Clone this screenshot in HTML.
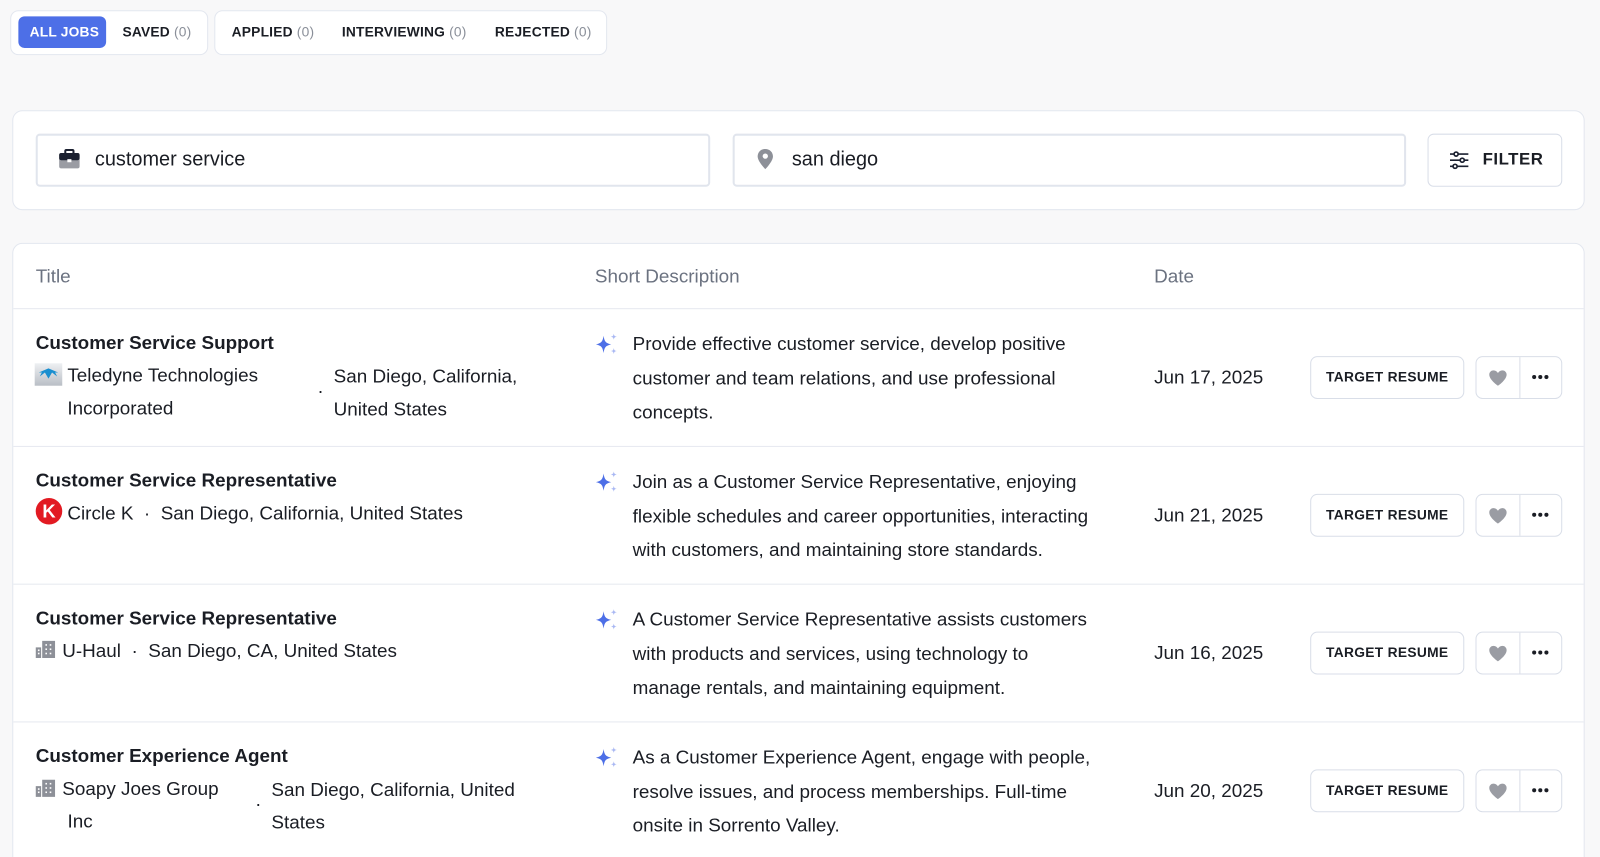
<!DOCTYPE html>
<html style="overflow:hidden;width:1600px;height:857px"><head><meta charset="utf-8"><style>
*{box-sizing:border-box;margin:0;padding:0}
body{width:1600px;height:857px;overflow:hidden;background:#f8f8f9;font-family:"Liberation Sans",sans-serif;color:#1a1d24;position:relative}
#w{position:absolute;left:0;top:0;width:1568px;height:840px;overflow:hidden;transform:scale(1.0204);transform-origin:0 0}
.abs{position:absolute}
.box{position:absolute;background:#fff;border:1.5px solid #e3e7ef;border-radius:8px}
.tab{position:absolute;top:24px;font-size:13.5px;font-weight:bold;letter-spacing:.2px;white-space:nowrap}
.tab span{font-weight:normal;color:#8a8f99}
.t{font-size:18.5px;white-space:nowrap;position:absolute}
.title{font-weight:bold;font-size:18.5px}
.sub{line-height:32px}
.desc{line-height:33.5px}
.btn{position:absolute;width:151px;height:42px;border:1.5px solid #d9dee8;border-radius:7px;background:#fff;font-size:13.5px;font-weight:bold;text-align:center;line-height:39px;letter-spacing:.3px}
.ic{position:absolute;width:85px;height:42px;border:1.5px solid #d9dee8;border-radius:7px;background:#fff}
.ic:after{content:"";position:absolute;left:42px;top:0;bottom:0;border-left:1.5px solid #d9dee8}
.row{position:absolute;left:13px;width:1539px;border-top:1.5px solid #e6e9f0}
</style></head><body><div id="w">
<div class="box" style="left:10px;top:10px;width:194px;height:44px"></div>
<div class="abs" style="left:18px;top:16px;width:86px;height:31px;background:#4d6fe7;border-radius:6px"></div>
<div class="tab" style="left:29px;color:#fff">ALL JOBS</div>
<div class="tab" style="left:120px">SAVED <span>(0)</span></div>
<div class="box" style="left:210px;top:10px;width:385px;height:44px"></div>
<div class="tab" style="left:227px">APPLIED <span>(0)</span></div>
<div class="tab" style="left:335px">INTERVIEWING <span>(0)</span></div>
<div class="tab" style="left:485px">REJECTED <span>(0)</span></div>

<div class="box" style="left:12px;top:108px;width:1541px;height:98px;border-radius:10px"></div>
<div class="abs" style="left:35px;top:131px;width:661px;height:52px;border:2px solid #e1e5ed;border-radius:4px"></div>
<svg class="abs" style="left:57px;top:146px" width="22" height="20" viewBox="0 0 22 20"><rect x="7" y="1" width="8" height="4" rx="1" fill="none" stroke="#1b2030" stroke-width="2"/><rect x="1" y="4" width="20" height="15" rx="2" fill="#9a9ca3"/><rect x="1" y="4" width="20" height="7" rx="2" fill="#1b2030"/><rect x="9" y="10" width="4" height="3" fill="#fff"/></svg>
<div class="t" style="left:93px;top:145px;font-size:19.5px">customer service</div>
<div class="abs" style="left:718px;top:131px;width:660px;height:52px;border:2px solid #e1e5ed;border-radius:4px"></div>
<svg class="abs" style="left:741px;top:145px" width="18" height="22" viewBox="0 0 18 22"><path d="M9 1C4.6 1 1.5 4.3 1.5 8.3c0 5 7.5 12.5 7.5 12.5s7.5-7.5 7.5-12.5C16.5 4.3 13.4 1 9 1z" fill="#8d9098"/><circle cx="9" cy="8" r="2.6" fill="#fff"/></svg>
<div class="t" style="left:776px;top:145px;font-size:19.5px">san diego</div>
<div class="abs" style="left:1399px;top:131px;width:132px;height:52px;border:1.5px solid #d9dee8;border-radius:6px;background:#fff"></div>
<svg class="abs" style="left:1420px;top:148px" width="20" height="18" viewBox="0 0 20 18" fill="none" stroke="#1b2030" stroke-width="1.6"><path d="M1 3h18M1 9h18M1 15h18"/><circle cx="7" cy="3" r="2" fill="#fff"/><circle cx="13" cy="9" r="2" fill="#fff"/><circle cx="6" cy="15" r="2" fill="#fff"/></svg>
<div class="t" style="left:1453px;top:147px;font-size:16.5px;font-weight:bold;letter-spacing:.5px">FILTER</div>

<div class="box" style="left:12px;top:238px;width:1541px;height:620px;border-radius:10px"></div>
<div class="t" style="left:35px;top:260px;color:#6b7280">Title</div>
<div class="t" style="left:583px;top:260px;color:#6b7280">Short Description</div>
<div class="t" style="left:1131px;top:260px;color:#6b7280">Date</div>

<div class="row" style="top:302px"></div>
<div class="row" style="top:437px"></div>
<div class="row" style="top:572px"></div>
<div class="row" style="top:707px"></div>

<div class="t title" style="left:35px;top:325px">Customer Service Support</div>
<div class="abs" style="left:34px;top:356px;width:27px;height:22px;background:linear-gradient(#eef0f3,#b9bec5)"></div>
<svg class="abs" style="left:36px;top:359px" width="23" height="12" viewBox="0 0 23 12"><path d="M11.5 2L2 6l3 0-2 4 5-4 3.5 6 3.5-6 5 4-2-4 3 0z" fill="#1a8fd0"/></svg>
<div class="t sub" style="left:66px;top:352px">Teledyne Technologies<br>Incorporated</div>
<div class="t" style="left:311px;top:372px">·</div>
<div class="t sub" style="left:327px;top:353px">San Diego, California,<br>United States</div>
<div class="t desc" style="left:620px;top:320px">Provide effective customer service, develop positive<br>customer and team relations, and use professional<br>concepts.</div>
<div class="t" style="left:1131px;top:359px">Jun 17, 2025</div>
<div class="btn" style="left:1284px;top:349px">TARGET RESUME</div>
<div class="ic" style="left:1446px;top:349px"></div>

<div class="t title" style="left:35px;top:460px">Customer Service Representative</div>
<div class="abs" style="left:35px;top:488px;width:26px;height:26px;border-radius:50%;background:#e21a22;color:#fff;font-weight:bold;font-size:18px;text-align:center;line-height:26px">K</div>
<div class="t" style="left:66px;top:492px">Circle K &nbsp;·&nbsp; San Diego, California, United States</div>
<div class="t desc" style="left:620px;top:455px">Join as a Customer Service Representative, enjoying<br>flexible schedules and career opportunities, interacting<br>with customers, and maintaining store standards.</div>
<div class="t" style="left:1131px;top:494px">Jun 21, 2025</div>
<div class="btn" style="left:1284px;top:484px">TARGET RESUME</div>
<div class="ic" style="left:1446px;top:484px"></div>

<div class="t title" style="left:35px;top:595px">Customer Service Representative</div>
<div class="t" style="left:61px;top:627px">U-Haul &nbsp;·&nbsp; San Diego, CA, United States</div>
<div class="t desc" style="left:620px;top:590px">A Customer Service Representative assists customers<br>with products and services, using technology to<br>manage rentals, and maintaining equipment.</div>
<div class="t" style="left:1131px;top:629px">Jun 16, 2025</div>
<div class="btn" style="left:1284px;top:619px">TARGET RESUME</div>
<div class="ic" style="left:1446px;top:619px"></div>

<div class="t title" style="left:35px;top:730px">Customer Experience Agent</div>
<div class="t sub" style="left:61px;top:757px">Soapy Joes Group<br>&nbsp;Inc</div>
<div class="t" style="left:250px;top:777px">·</div>
<div class="t sub" style="left:266px;top:758px">San Diego, California, United<br>States</div>
<div class="t desc" style="left:620px;top:725px">As a Customer Experience Agent, engage with people,<br>resolve issues, and process memberships. Full-time<br>onsite in Sorrento Valley.</div>
<div class="t" style="left:1131px;top:764px">Jun 20, 2025</div>
<div class="btn" style="left:1284px;top:754px">TARGET RESUME</div>
<div class="ic" style="left:1446px;top:754px"></div>

<svg class="abs" style="left:583px;top:326px" width="24" height="24" viewBox="0 0 24 24"><path d="M8.5 3C9.5 9 10.5 10 16 11.5 10.5 13 9.5 14 8.5 20 7.5 14 6.5 13 1 11.5 6.5 10 7.5 9 8.5 3z" fill="#4d6fe7"/><path d="M18.5 1c.4 2.2.8 2.6 3 3-2.2.4-2.6.8-3 3-.4-2.2-.8-2.6-3-3 2.2-.4 2.6-.8 3-3zM18.5 15c.4 2.2.8 2.6 3 3-2.2.4-2.6.8-3 3-.4-2.2-.8-2.6-3-3 2.2-.4 2.6-.8 3-3z" fill="#a9b8f3"/></svg>
<svg class="abs" style="left:583px;top:461px" width="24" height="24" viewBox="0 0 24 24"><path d="M8.5 3C9.5 9 10.5 10 16 11.5 10.5 13 9.5 14 8.5 20 7.5 14 6.5 13 1 11.5 6.5 10 7.5 9 8.5 3z" fill="#4d6fe7"/><path d="M18.5 1c.4 2.2.8 2.6 3 3-2.2.4-2.6.8-3 3-.4-2.2-.8-2.6-3-3 2.2-.4 2.6-.8 3-3zM18.5 15c.4 2.2.8 2.6 3 3-2.2.4-2.6.8-3 3-.4-2.2-.8-2.6-3-3 2.2-.4 2.6-.8 3-3z" fill="#a9b8f3"/></svg>
<svg class="abs" style="left:583px;top:596px" width="24" height="24" viewBox="0 0 24 24"><path d="M8.5 3C9.5 9 10.5 10 16 11.5 10.5 13 9.5 14 8.5 20 7.5 14 6.5 13 1 11.5 6.5 10 7.5 9 8.5 3z" fill="#4d6fe7"/><path d="M18.5 1c.4 2.2.8 2.6 3 3-2.2.4-2.6.8-3 3-.4-2.2-.8-2.6-3-3 2.2-.4 2.6-.8 3-3zM18.5 15c.4 2.2.8 2.6 3 3-2.2.4-2.6.8-3 3-.4-2.2-.8-2.6-3-3 2.2-.4 2.6-.8 3-3z" fill="#a9b8f3"/></svg>
<svg class="abs" style="left:583px;top:731px" width="24" height="24" viewBox="0 0 24 24"><path d="M8.5 3C9.5 9 10.5 10 16 11.5 10.5 13 9.5 14 8.5 20 7.5 14 6.5 13 1 11.5 6.5 10 7.5 9 8.5 3z" fill="#4d6fe7"/><path d="M18.5 1c.4 2.2.8 2.6 3 3-2.2.4-2.6.8-3 3-.4-2.2-.8-2.6-3-3 2.2-.4 2.6-.8 3-3zM18.5 15c.4 2.2.8 2.6 3 3-2.2.4-2.6.8-3 3-.4-2.2-.8-2.6-3-3 2.2-.4 2.6-.8 3-3z" fill="#a9b8f3"/></svg>

<svg class="abs" style="left:34px;top:627px" width="21" height="19" viewBox="0 0 20 18"><path d="M1 7h5v10H1zM7 1h12v16H7z" fill="#8d9098"/><g fill="#fff"><rect x="3" y="9" width="1.5" height="1.5"/><rect x="3" y="12" width="1.5" height="1.5"/><rect x="10" y="4" width="1.5" height="1.5"/><rect x="14" y="4" width="1.5" height="1.5"/><rect x="10" y="8" width="1.5" height="1.5"/><rect x="14" y="8" width="1.5" height="1.5"/><rect x="10" y="12" width="1.5" height="1.5"/><rect x="14" y="12" width="1.5" height="1.5"/></g></svg>
<svg class="abs" style="left:34px;top:763px" width="21" height="19" viewBox="0 0 20 18"><path d="M1 7h5v10H1zM7 1h12v16H7z" fill="#8d9098"/><g fill="#fff"><rect x="3" y="9" width="1.5" height="1.5"/><rect x="3" y="12" width="1.5" height="1.5"/><rect x="10" y="4" width="1.5" height="1.5"/><rect x="14" y="4" width="1.5" height="1.5"/><rect x="10" y="8" width="1.5" height="1.5"/><rect x="14" y="8" width="1.5" height="1.5"/><rect x="10" y="12" width="1.5" height="1.5"/><rect x="14" y="12" width="1.5" height="1.5"/></g></svg>

<svg class="abs" style="left:1458px;top:362px" width="20" height="17" viewBox="0 0 20 18"><path d="M10 17S1 11 1 5.5C1 2.8 3 1 5.5 1 7.5 1 9 2.3 10 3.8 11 2.3 12.5 1 14.5 1 17 1 19 2.8 19 5.5 19 11 10 17 10 17z" fill="#9a9ca3"/></svg>
<svg class="abs" style="left:1458px;top:497px" width="20" height="17" viewBox="0 0 20 18"><path d="M10 17S1 11 1 5.5C1 2.8 3 1 5.5 1 7.5 1 9 2.3 10 3.8 11 2.3 12.5 1 14.5 1 17 1 19 2.8 19 5.5 19 11 10 17 10 17z" fill="#9a9ca3"/></svg>
<svg class="abs" style="left:1458px;top:632px" width="20" height="17" viewBox="0 0 20 18"><path d="M10 17S1 11 1 5.5C1 2.8 3 1 5.5 1 7.5 1 9 2.3 10 3.8 11 2.3 12.5 1 14.5 1 17 1 19 2.8 19 5.5 19 11 10 17 10 17z" fill="#9a9ca3"/></svg>
<svg class="abs" style="left:1458px;top:767px" width="20" height="17" viewBox="0 0 20 18"><path d="M10 17S1 11 1 5.5C1 2.8 3 1 5.5 1 7.5 1 9 2.3 10 3.8 11 2.3 12.5 1 14.5 1 17 1 19 2.8 19 5.5 19 11 10 17 10 17z" fill="#9a9ca3"/></svg>

<svg class="abs" style="left:1501px;top:367px" width="17" height="5"><circle cx="2.5" cy="2.5" r="2" fill="#1a1d24"/><circle cx="8.5" cy="2.5" r="2" fill="#1a1d24"/><circle cx="14.5" cy="2.5" r="2" fill="#1a1d24"/></svg>
<svg class="abs" style="left:1501px;top:502px" width="17" height="5"><circle cx="2.5" cy="2.5" r="2" fill="#1a1d24"/><circle cx="8.5" cy="2.5" r="2" fill="#1a1d24"/><circle cx="14.5" cy="2.5" r="2" fill="#1a1d24"/></svg>
<svg class="abs" style="left:1501px;top:637px" width="17" height="5"><circle cx="2.5" cy="2.5" r="2" fill="#1a1d24"/><circle cx="8.5" cy="2.5" r="2" fill="#1a1d24"/><circle cx="14.5" cy="2.5" r="2" fill="#1a1d24"/></svg>
<svg class="abs" style="left:1501px;top:772px" width="17" height="5"><circle cx="2.5" cy="2.5" r="2" fill="#1a1d24"/><circle cx="8.5" cy="2.5" r="2" fill="#1a1d24"/><circle cx="14.5" cy="2.5" r="2" fill="#1a1d24"/></svg>
</div></body></html>
